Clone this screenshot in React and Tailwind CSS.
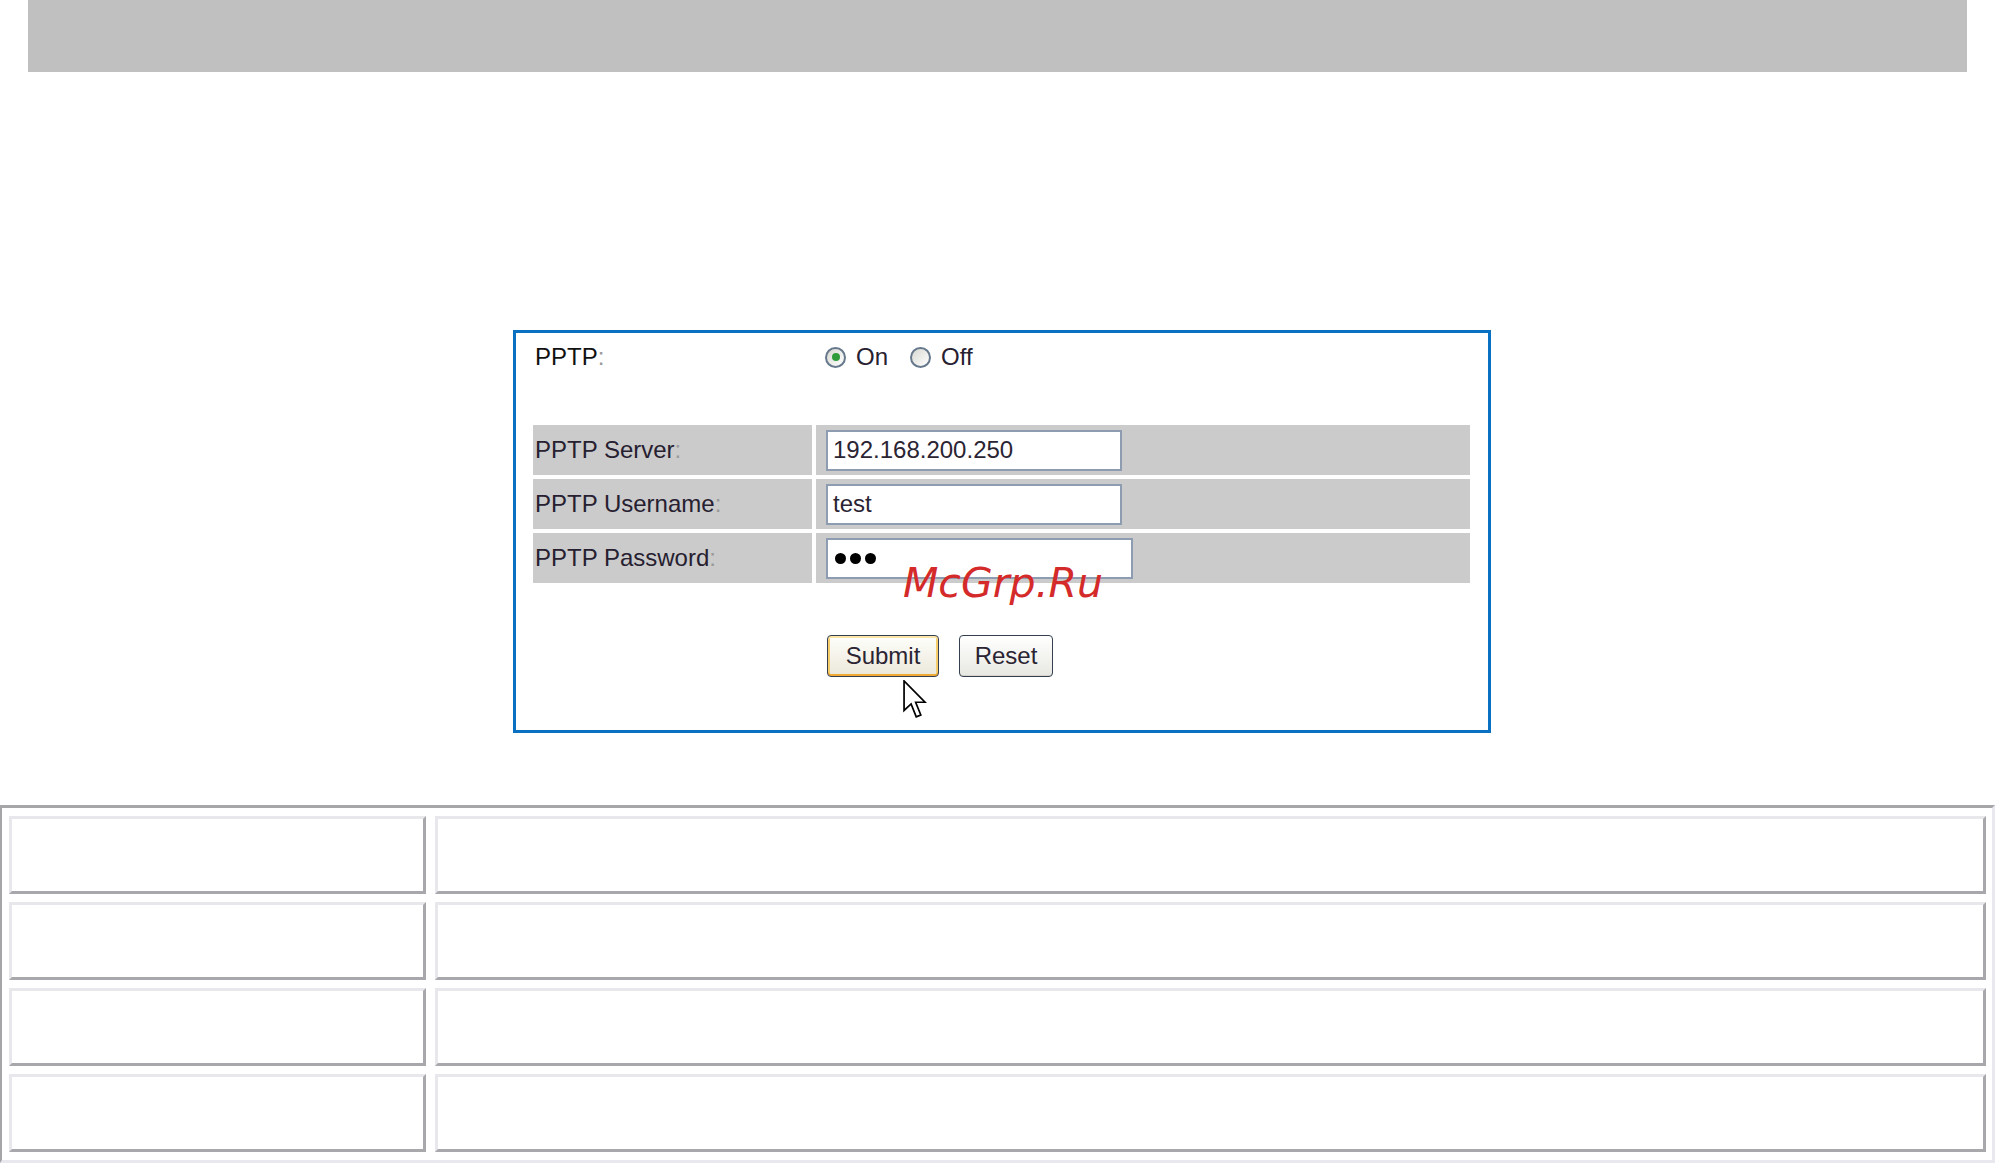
import React from "react";

const FONT = { fontFamily: '"Liberation Sans", Arial, sans-serif' };

function Radio({ checked }) {
  return (
    <span className="flex h-[21px] w-[21px] items-center justify-center rounded-full border-2 border-[#66788c] bg-gradient-to-br from-[#d8d8d2] to-[#ffffff]">
      {checked && <span className="h-[8px] w-[8px] rounded-full bg-[#2f9c3a]" />}
    </span>
  );
}

function Label({ children }) {
  return (
    <span>
      {children}
      <span className="text-[#9a9a9a]">:</span>
    </span>
  );
}

function FieldRow({ label, children }) {
  return (
    <div className="grid h-[50px] grid-cols-[279px_654px] gap-x-[4px]">
      <div className="flex items-center bg-[#cbcbcb] pl-[2px] text-[#262030]">
        <Label>{label}</Label>
      </div>
      <div className="flex items-center bg-[#cbcbcb] pl-[10px]">{children}</div>
    </div>
  );
}

function TextBox({ width, children }) {
  return (
    <div
      className={`flex h-[41px] items-center border-2 border-[#8d9cb0] bg-white pl-[5px] text-[#2a2433] ${width}`}
    >
      {children}
    </div>
  );
}

function Cursor() {
  return (
    <svg
      className="absolute left-[903px] top-[680px]"
      width="24"
      height="39"
      viewBox="0 0 12.5 20.5"
    >
      <path
        d="M0.5 0.5 L0.5 16 L4.2 12.6 L6.9 19.4 L9.3 18.4 L6.6 11.7 L11.5 11.7 Z"
        fill="#ffffff"
        stroke="#000000"
        strokeWidth="0.9"
        strokeLinejoin="miter"
      />
    </svg>
  );
}

export default function App() {
  return (
    <div className="relative h-[1163px] w-[1995px] overflow-hidden bg-white" style={FONT}>
      {/* header bar */}
      <div className="ml-[28px] h-[72px] w-[1939px] bg-[#c0c0c0]" />

      {/* PPTP settings box */}
      <div className="ml-[513px] mt-[258px] box-border h-[403px] w-[978px] border-[3px] border-[#0a70c2] pl-[17px] pt-[12px] text-[24px] leading-[24px]">
        <div className="grid h-[24px] grid-cols-[283px_auto] items-center">
          <div className="pl-[2px] text-[#111]">
            <Label>PPTP</Label>
          </div>
          <div className="flex items-center pl-[9px] text-[#262030]">
            <Radio checked />
            <span className="ml-[10px]">On</span>
            <span className="ml-[22px]">
              <Radio />
            </span>
            <span className="ml-[10px]">Off</span>
          </div>
        </div>

        <div className="mt-[56px] flex flex-col gap-y-[4px]">
          <FieldRow label="PPTP Server">
            <TextBox width="w-[296px]">192.168.200.250</TextBox>
          </FieldRow>
          <FieldRow label="PPTP Username">
            <TextBox width="w-[296px]">test</TextBox>
          </FieldRow>
          <FieldRow label="PPTP Password">
            <TextBox width="w-[307px]">
              <span className="ml-[2px] flex gap-[4px]">
                <span className="h-[11px] w-[11px] rounded-full bg-black" />
                <span className="h-[11px] w-[11px] rounded-full bg-black" />
                <span className="h-[11px] w-[11px] rounded-full bg-black" />
              </span>
            </TextBox>
          </FieldRow>
        </div>

        <div className="ml-[294px] mt-[52px] flex gap-[20px]">
          <button className="flex h-[42px] w-[112px] items-center justify-center rounded-[4px] border-[1.5px] border-[#34404f] bg-gradient-to-b from-[#fefefb] to-[#ebe8da] text-[#2a2433] shadow-[inset_0_-2px_0_#f1a935,inset_0_2px_0_#fde6a8,inset_2px_0_0_#f7cc6a,inset_-2px_0_0_#f7cc6a]">
            Submit
          </button>
          <button className="flex h-[42px] w-[94px] items-center justify-center rounded-[4px] border-[1.5px] border-[#34404f] bg-gradient-to-b from-[#ffffff] to-[#e8e8e2] text-[#2a2433] shadow-[inset_0_-1px_0_#d6d4cc]">
            Reset
          </button>
        </div>
      </div>

      {/* bottom table */}
      <div className="mt-[72px] box-border h-[358px] w-[1995px] border-b-[3px] border-l-[2px] border-r-[3px] border-t-[3px] border-b-[#e9e8ee] border-l-[#a6a6a8] border-r-[#e9e8ee] border-t-[#a6a6a8] pb-[8px] pl-[7px] pr-[6px] pt-[8px]">
        <div className="grid grid-cols-[417px_1551px] grid-rows-[78px_78px_78px_78px] gap-x-[9px] gap-y-[8px]">
          {Array.from({ length: 8 }).map((_, i) => (
            <div
              key={i}
              className="box-border border-[3px] border-b-[#a8a7ab] border-l-[#e8e7ec] border-r-[#a8a7ab] border-t-[#e8e7ec] bg-white"
            />
          ))}
        </div>
      </div>

      <Cursor />

      <div
        className="absolute left-[903px] top-[563px] text-[41px] italic leading-[41px] text-[#d42a2a]"
        style={{ fontFamily: '"DejaVu Sans", Verdana, sans-serif' }}
      >
        McGrp.Ru
      </div>
    </div>
  );
}
